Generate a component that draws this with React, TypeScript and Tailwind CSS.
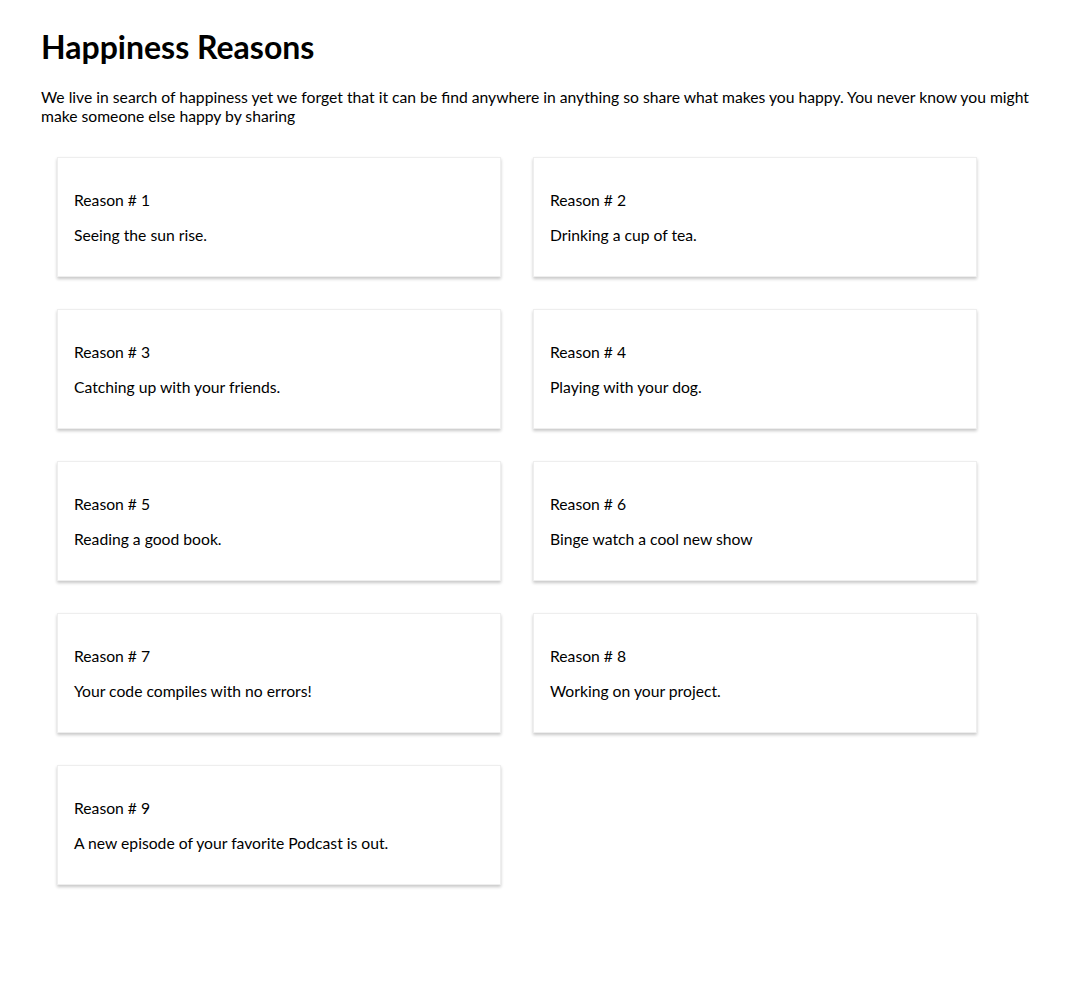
const reasons = [
  'Seeing the sun rise.',
  'Drinking a cup of tea.',
  'Catching up with your friends.',
  'Playing with your dog.',
  'Reading a good book.',
  'Binge watch a cool new show',
  'Your code compiles with no errors!',
  'Working on your project.',
  'A new episode of your favorite Podcast is out.',
];

export default function App() {
  return (
    <main className="min-h-screen bg-white text-black font-['Lato','Open_Sans',sans-serif] px-[41px] pt-[27px] pb-10">
      <h1 className="text-[32px] font-bold leading-[40px]">Happiness Reasons</h1>
      <p className="mt-[21px] text-[15.7px] leading-[19px]">
        We live in search of happiness yet we forget that it can be find anywhere in anything so share what makes you happy. You never know you might make someone else happy by sharing
      </p>

      <div className="mt-[31px] ml-4 grid grid-cols-[444px_444px] gap-x-[32px] gap-y-[32px]">
        {reasons.map((r, i) => (
          <div
            key={i}
            className="bg-white border border-[#eeeeee] shadow-[0_2px_3px_rgba(0,0,0,0.22)] pt-[33px] pb-[31px] px-[16px] text-[15.7px] leading-[19px]"
          >
            <p>Reason # {i + 1}</p>
            <p className="mt-[16px]">{r}</p>
          </div>
        ))}
      </div>
    </main>
  );
}
